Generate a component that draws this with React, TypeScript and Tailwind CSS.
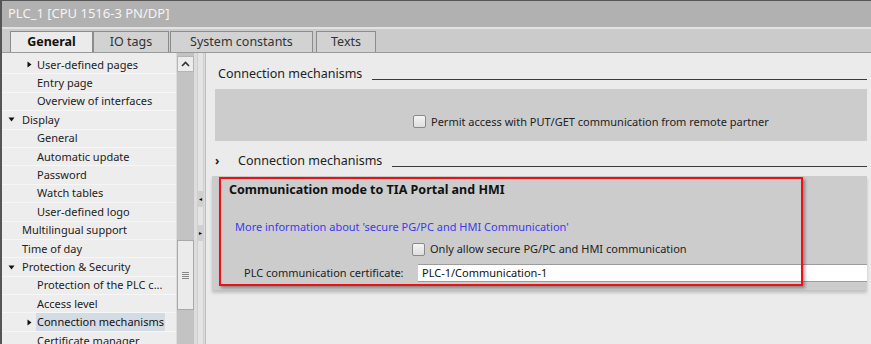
import React from 'react';

interface TreeItem {
  label: string;
  level: 1 | 2;
  arrow?: 'right' | 'down';
  selected?: boolean;
}

const tree: TreeItem[] = [
  { label: 'User-defined pages', level: 2, arrow: 'right' },
  { label: 'Entry page', level: 2 },
  { label: 'Overview of interfaces', level: 2 },
  { label: 'Display', level: 1, arrow: 'down' },
  { label: 'General', level: 2 },
  { label: 'Automatic update', level: 2 },
  { label: 'Password', level: 2 },
  { label: 'Watch tables', level: 2 },
  { label: 'User-defined logo', level: 2 },
  { label: 'Multilingual support', level: 1 },
  { label: 'Time of day', level: 1 },
  { label: 'Protection & Security', level: 1, arrow: 'down' },
  { label: 'Protection of the PLC c...', level: 2 },
  { label: 'Access level', level: 2 },
  { label: 'Connection mechanisms', level: 2, arrow: 'right', selected: true },
  { label: 'Certificate manager', level: 2 },
];

const Arrow: React.FC<{ dir: 'right' | 'down' }> = ({ dir }) => (
  <svg width="7" height="7" viewBox="0 0 7 7" className="shrink-0">
    {dir === 'right' ? <path d="M1.5 0.5 L5.5 3.5 L1.5 6.5 Z" fill="#111" /> : <path d="M0.5 1.5 L6.5 1.5 L3.5 5.5 Z" fill="#111" />}
  </svg>
);

const Checkbox: React.FC = () => (
  <div className="w-[13px] h-[13px] rounded-[2px] border border-[#8a8a8a] bg-gradient-to-b from-[#f4f4f4] to-[#dedede] shrink-0" />
);

const SectionHeader: React.FC<{ title: string; chevron?: boolean }> = ({ title, chevron }) => (
  <div className="flex items-center h-[20px]">
    {chevron ? (
      <>
        <span className="w-[32px] pl-[9px] text-[12px] font-bold text-[#222]">›</span>
        <span className="text-[12.5px] text-[#222]">{title}</span>
      </>
    ) : (
      <span className="pl-[12px] text-[12.5px] text-[#222]">{title}</span>
    )}
    <div className="flex-1 ml-[10px] mt-[10px] border-t border-[#3a3a3a] h-0" />
  </div>
);

export default function App() {
  return (
    <div
      className="relative w-[871px] h-[344px] overflow-hidden bg-[#ebebeb] flex flex-col border-l-2 border-t border-[#555]"
      style={{ fontFamily: '"Noto Sans", "Open Sans", sans-serif' }}
    >
      {/* Title bar */}
      <div className="h-[26px] bg-[#b1b1b1] flex items-center pl-[6px] text-[13px] text-[#f4f4f4]">
        PLC_1 [CPU 1516-3 PN/DP]
      </div>

      {/* Tabs */}
      <div className="h-[26px] bg-[#cbcbcb] border-t-2 border-[#e2e2e2] flex items-end pl-[8px] border-b border-b-[#9a9a9a]">
        <div className="h-[21px] w-[83px] bg-[#ebebeb] border border-b-0 border-[#8c8c8c] flex items-center justify-center text-[12.5px] font-bold text-[#111]">
          General
        </div>
        <div className="h-[21px] w-[76px] bg-[#d2d2d2] border border-b-0 border-[#8c8c8c] flex items-center justify-center text-[12.5px] text-[#333]">
          IO tags
        </div>
        <div className="h-[21px] w-[143px] ml-[1px] bg-[#d2d2d2] border border-b-0 border-[#8c8c8c] flex items-center justify-center text-[12.5px] text-[#333]">
          System constants
        </div>
        <div className="h-[21px] w-[60px] ml-[3px] bg-[#d2d2d2] border border-b-0 border-[#8c8c8c] flex items-center justify-center text-[12.5px] text-[#333]">
          Texts
        </div>
      </div>

      {/* Body */}
      <div className="flex-1 flex min-h-0">
        {/* Tree */}
        <div className="w-[174px] pt-[3px] bg-[#ededed]">
          {tree.map((item, i) => (
            <div key={i} className="h-[18.4px] flex items-center border-b border-[#f6f6f6]">
              <div className={`flex items-center ${item.level === 1 ? 'pl-[6px]' : 'pl-[24px]'}`}>
                <div className={`${item.level === 1 ? 'w-[13px]' : 'w-[10px]'} flex items-center`}>
                  {item.arrow && <Arrow dir={item.arrow} />}
                </div>
                <span
                  className={`text-[11px] leading-[18px] px-[1px] whitespace-nowrap ${
                    item.selected ? 'bg-[#d3dbe5] text-[#111]' : 'text-[#222]'
                  }`}
                >
                  {item.label}
                </span>
              </div>
            </div>
          ))}
        </div>

        {/* Scrollbar */}
        <div className="w-[19px] bg-[#c3c3c3] border-x border-[#dcdcdc] flex flex-col items-center pt-[3px]">
          <div className="w-[17px] h-[16px] bg-[#ececec] border border-[#b5b5b5] flex items-center justify-center">
            <svg width="9" height="6" viewBox="0 0 9 6">
              <path d="M1 5 L4.5 1.5 L8 5" stroke="#333" strokeWidth="1.6" fill="none" />
            </svg>
          </div>
          <div className="mt-[168px] w-[17px] h-[70px] bg-[#ebebeb] border border-[#a9a9a9] flex items-center justify-center">
            <div className="flex flex-col gap-[1px]">
              <div className="w-[7px] h-px bg-[#888]" />
              <div className="w-[7px] h-px bg-[#888]" />
              <div className="w-[7px] h-px bg-[#888]" />
              <div className="w-[7px] h-px bg-[#888]" />
            </div>
          </div>
        </div>

        {/* Splitter */}
        <div className="w-[11px] bg-[#dddddd] border-r border-[#bdbdbd] flex flex-col items-center">
          <div className="w-[7px] flex-1 border-x border-[#cfcfcf] bg-[#e4e4e4] flex flex-col items-center pt-[138px]">
            <div className="w-[7px] h-[16px] bg-[#d0d0d0] flex items-center justify-center text-[6px] leading-none text-black">◂</div>
            <div className="mt-[18px] w-[7px] h-[16px] bg-[#d0d0d0] flex items-center justify-center text-[6px] leading-none text-black">▸</div>
          </div>
        </div>

        {/* Right panel */}
        <div className="flex-1 pt-[11px] pr-[4px] bg-[#ebebeb]">
          <SectionHeader title="Connection mechanisms" />
          <div className="mt-[5px] ml-[9px] h-[52px] bg-[#cccccc] flex items-end pb-[13px] pl-[198px]">
            <Checkbox />
            <span className="ml-[5px] text-[11px] leading-[13px] text-[#222]">Permit access with PUT/GET communication from remote partner</span>
          </div>
          <div className="mt-[10px]">
            <SectionHeader title="Connection mechanisms" chevron />
          </div>
          <div className="relative mt-[5px] ml-[6px] bg-[#cccccc] shadow-[0_3px_3px_rgba(0,0,0,0.18)] pt-[5px] pb-[8px]">
            <div className="pl-[17px] h-[20px] text-[12.5px] font-bold text-[#111]">
              Communication mode to TIA Portal and HMI
            </div>
            <div className="mt-[18px] pl-[23px] text-[11px] text-[#3a3af0] h-[15px]">
              More information about 'secure PG/PC and HMI Communication'
            </div>
            <div className="mt-[8px] h-[14px] flex items-center pl-[200px]">
              <Checkbox />
              <span className="ml-[5px] text-[11px] text-[#222] whitespace-nowrap">Only allow secure PG/PC and HMI communication</span>
            </div>
            <div className="mt-[8px] h-[18px] flex items-center">
              <span className="pl-[32px] w-[206px] text-[11px] text-[#222]">PLC communication certificate:</span>
              <div className="flex-1 h-[18px] bg-white border-y border-[#9c9c9c] flex items-center pl-[4px] text-[11px] text-[#111]">
                PLC-1/Communication-1
              </div>
            </div>
            {/* red highlight annotation */}
            <div className="pointer-events-none absolute left-[7px] top-[1px] w-[584px] h-[109px] border-2 border-[#ee1111] shadow-[2px_2px_3px_rgba(0,0,0,0.35)]" />
          </div>
        </div>
      </div>
    </div>
  );
}
